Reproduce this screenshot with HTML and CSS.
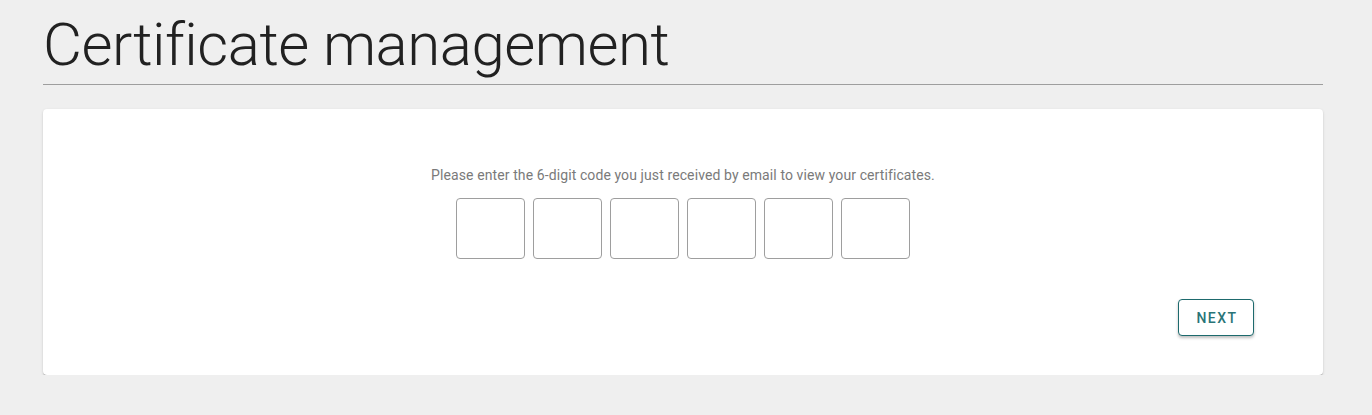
FILE: index.html
```html
<!DOCTYPE html>
<html>
  <head>
    <meta charset="utf-8">
    <title>Certificate management</title>
    <link rel="stylesheet" href="styles.css">
  </head>
  <body>
    <div class="page">
      <h1 class="title">Certificate management</h1>

      <div class="card">
        <p class="hint">Please enter the 6-digit code you just received by email to view your certificates.</p>
        <div class="code">
          <input class="digit" type="text" maxlength="1" />
          <input class="digit" type="text" maxlength="1" />
          <input class="digit" type="text" maxlength="1" />
          <input class="digit" type="text" maxlength="1" />
          <input class="digit" type="text" maxlength="1" />
          <input class="digit" type="text" maxlength="1" />
        </div>
        <div class="actions">
          <button class="next">Next</button>
        </div>
      </div>
    </div>
  </body>
</html>
```

FILE: styles.css
```css
body {
  margin: 0;
  background-color: #efefef;
  font-family: Roboto, "Liberation Sans", sans-serif;
}
.page {
  width: 1280px;
  margin: 0 0 0 43px;
  padding-top: 8px;
}
.title {
  font-size: 60px;
  font-weight: 300;
  letter-spacing: -0.5px;
  color: #212121;
  margin: 0;
  line-height: 74px;
  padding-bottom: 2px;
  border-bottom: 1px solid #9e9e9e;
}
.card {
  margin-top: 24px;
  background-color: #fff;
  border-radius: 4px;
  box-shadow: 0 2px 1px -1px rgba(0,0,0,0.2), 0 1px 1px 0 rgba(0,0,0,0.14), 0 1px 3px 0 rgba(0,0,0,0.12);
  padding: 57px 69px 39px;
}
.hint {
  text-align: center;
  color: #7a7a7a;
  font-size: 14px;
  letter-spacing: 0.1px;
  line-height: 18px;
  margin: 0 0 14px;
}
.code {
  display: flex;
  justify-content: center;
  gap: 8px;
}
.digit {
  width: 69px;
  height: 61px;
  box-sizing: border-box;
  border: 1px solid #9e9e9e;
  border-radius: 4px;
  font-size: 24px;
  text-align: center;
  padding: 0;
}
.actions {
  display: flex;
  justify-content: flex-end;
  margin-top: 40px;
}
.next {
  background-color: #fff;
  border: 1px solid #1d6a6d;
  color: #2a7477;
  font-family: Roboto, "Liberation Sans", sans-serif;
  font-size: 14px;
  font-weight: 500;
  letter-spacing: 1.5px;
  text-transform: uppercase;
  width: 76px;
  height: 37px;
  padding: 0 0 0 2px;
  border-radius: 4px;
  cursor: pointer;
  box-shadow: 0 2px 3px rgba(0,0,0,0.25);
}
```
